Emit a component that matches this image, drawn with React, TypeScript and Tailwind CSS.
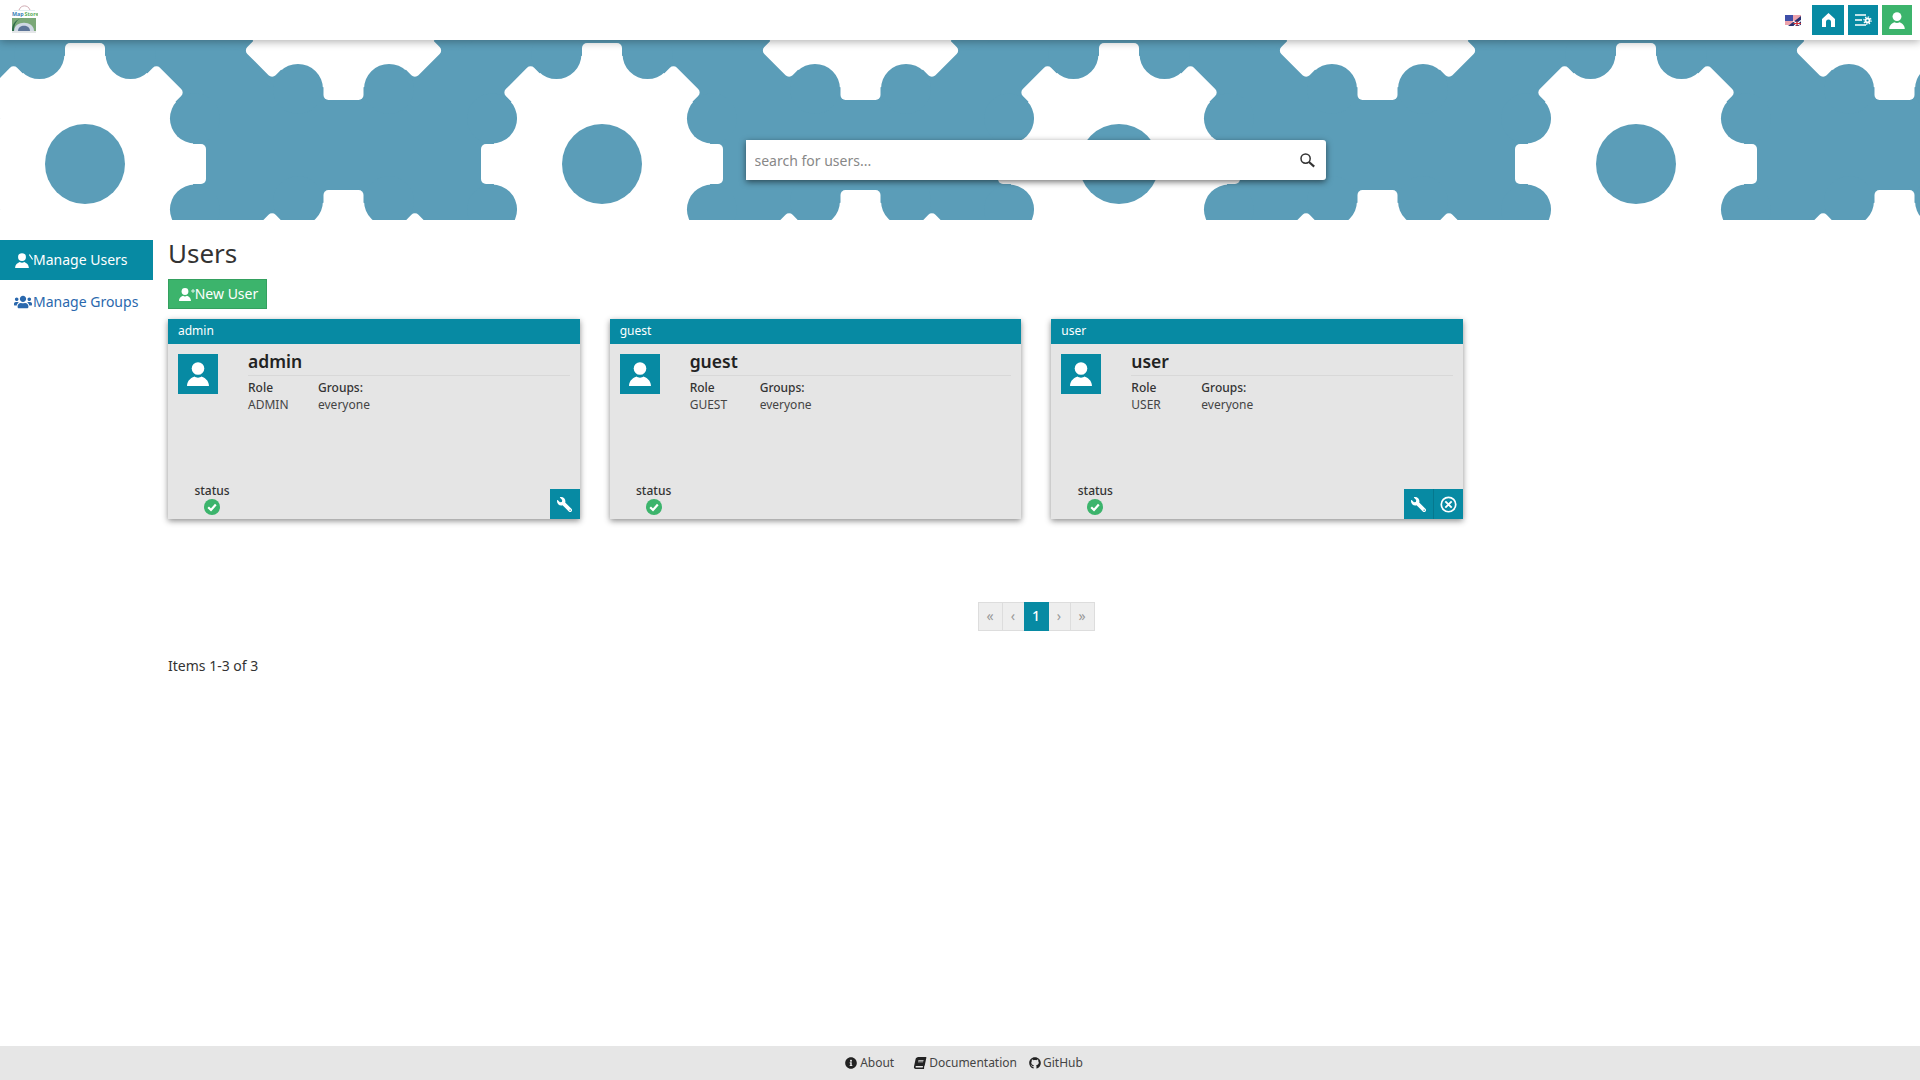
import { FaBook, FaGithub, FaInfoCircle, FaUsers, FaWrench } from "react-icons/fa";

const users = [
  { name: "admin", role: "ADMIN", canEdit: true, canDelete: false },
  { name: "guest", role: "GUEST", canEdit: false, canDelete: false },
  { name: "user", role: "USER", canEdit: true, canDelete: true },
];

const gearAngles = [0, 45, 90, 135, 180, 225, 270, 315];
const mainGears = [85, 602, 1119, 1636];
const offsetGears = [343.5, 860.5, 1377.5, 1894.5];

const PersonIcon = ({ className }: { className: string }) => (
  <svg viewBox="0 0 22 24" className={className} fill="currentColor">
    <circle cx="11" cy="6.5" r="6.3" />
    <path d="M0 24C0 18 5 15.5 7.5 14.5C9 16 13 16 14.5 14.5C17 15.5 22 18 22 24Z" />
  </svg>
);

const Gear = ({ x, y }: { x: number; y: number }) => (
  <g transform={`translate(${x} ${y})`}>
    <circle r="110" fill="#fff" />
    {gearAngles.map((a) => (
      <rect key={a} x="-20" y="-121" width="40" height="42" rx="5" fill="#fff" transform={`rotate(${a})`} />
    ))}
    {gearAngles.map((a) => (
      <circle key={a} cy="-119" r="25" fill="#5b9db8" transform={`rotate(${a + 22.5})`} />
    ))}
    <circle r="40" fill="#5b9db8" />
  </g>
);

const Logo = () => (
  <svg viewBox="0 0 28 30" className="w-7 h-[30px] ml-[10px] mt-[3px]">
    <path d="M9 7C11 1.5 18 1.5 20 7" fill="none" stroke="#c9a0a8" strokeWidth="0.9" />
    <path d="M4 7.5H25" stroke="#cfe0e6" strokeWidth="0.6" />
    <text x="2" y="12.5" fontSize="5.4" fontWeight="700" fontFamily="'Noto Sans', sans-serif">
      <tspan fill="#3b82b8">Map</tspan>
      <tspan fill="#5aae5c" dx="0.8">Store</tspan>
    </text>
    <rect x="2" y="15" width="24" height="13" fill="#7ba878" />
    <path d="M4 28C4 17 24 17 24 28Z" fill="#cfd8e4" />
    <path d="M8 28C8 21 20 21 20 28Z" fill="#5d7598" />
    <path d="M2 28C2 15 14 15 14 15C7 15 4 21 4 28Z" fill="#2f6e4a" />
    <rect x="2" y="28" width="24" height="2" fill="#e4e6e8" />
  </svg>
);

const Flag = () => (
  <svg viewBox="0 0 16 11" className="w-4 h-[11px] mr-[11px]">
    <rect width="16" height="11" fill="#fff" />
    <path d="M0 1H16M0 3H16M0 5H16M0 7H16M0 9H16" stroke="#d9475a" strokeWidth="1" />
    <rect width="8" height="6" fill="#3f4fa8" />
    <path d="M16 1L3 11H16Z" fill="#27306e" />
    <path d="M9 11L16 5.5M16 11L8 6" stroke="#fff" strokeWidth="1.2" />
    <path d="M12 6V11M8.5 8.5H16" stroke="#d33" strokeWidth="1" />
  </svg>
);

const StatusIcon = () => (
  <svg viewBox="0 0 16 16" className="w-4 h-4">
    <circle cx="8" cy="8" r="8" fill="#3cb46c" />
    <path d="M4.2 8.2L7 11L11.8 5.6" fill="none" stroke="#fff" strokeWidth="2.2" />
  </svg>
);

const UserCard = ({
  name,
  role,
  canEdit,
  canDelete,
}: {
  name: string;
  role: string;
  canEdit: boolean;
  canDelete: boolean;
}) => (
  <div className="h-[200px] flex flex-col bg-[#e5e5e5] shadow-[0_2px_6px_rgba(0,0,0,0.45)]">
    <div className="h-[25px] bg-[#078aa3] text-white text-[12px] leading-[23px] px-[10px]">{name}</div>
    <div className="flex-1 flex pl-[10px] pr-[10px] pt-[10px]">
      <div className="w-10 h-10 bg-[#078aa3] text-white flex items-center justify-center shrink-0">
        <PersonIcon className="w-[22px] h-6" />
      </div>
      <div className="flex-1 ml-[30px] text-[#333]">
        <div className="h-[21.5px] text-[17.5px] leading-[14px] font-semibold text-[#222] border-b border-[#d8d8d8]">{name}</div>
        <div className="flex text-[12px] leading-[17px] mt-[3.5px]">
          <div className="w-[70px]">
            <div className="font-medium">Role</div>
            <div className="text-[#444]">{role}</div>
          </div>
          <div>
            <div className="font-medium">Groups:</div>
            <div className="text-[#444]">everyone</div>
          </div>
        </div>
      </div>
    </div>
    <div className="flex items-end justify-between h-[30px]">
      <div className="w-[88px] flex flex-col items-center text-[12px] leading-[16px] font-medium text-[#333] pb-[4px]">
        <span>status</span>
        <StatusIcon />
      </div>
      <div className="flex">
        {canEdit && (
          <button className="w-[29.5px] h-[30px] bg-[#078aa3] text-white flex items-center justify-center">
            <FaWrench className="w-[15px] h-[15px] -scale-x-100" />
          </button>
        )}
        {canDelete && (
          <button className="w-[29.5px] h-[30px] bg-[#078aa3] text-white border-l border-[#06788e] flex items-center justify-center">
            <svg viewBox="0 0 16 16" className="w-[17px] h-[17px]" fill="none" stroke="currentColor">
              <circle cx="8" cy="8" r="6.8" strokeWidth="1.6" />
              <path d="M5 5L11 11M11 5L5 11" strokeWidth="1.8" />
            </svg>
          </button>
        )}
      </div>
    </div>
  </div>
);

const App = () => {
  return (
    <div className="h-screen flex flex-col bg-white font-['Noto_Sans',sans-serif] text-[14px] text-[#333]">
      <header className="relative z-10 h-10 bg-white shadow-[0_2px_8px_rgba(0,0,0,0.3)] flex items-start justify-between">
        <Logo />
        <div className="flex items-center h-10 pr-2">
          <Flag />
          <button className="w-8 h-[30px] bg-[#078aa3] text-white flex items-center justify-center">
            <svg viewBox="0 0 13 14" className="w-[13px] h-[14px]" fill="currentColor">
              <path d="M6.5 0L13 6V14H9V9A2.5 2.5 0 0 0 4 9V14H0V6Z" />
            </svg>
          </button>
          <button className="w-[30px] h-[30px] ml-1 bg-[#078aa3] text-white flex items-center justify-center">
            <svg viewBox="0 0 17 12" className="w-[17px] h-3" fill="none" stroke="currentColor">
              <path d="M0 1H11M0 6H7M0 11H11" strokeWidth="1.3" />
              <circle cx="12.5" cy="6.5" r="2" strokeWidth="1.8" />
              <circle cx="12.5" cy="6.5" r="3.6" strokeWidth="1.3" strokeDasharray="1.4 1.4" />
            </svg>
          </button>
          <button className="w-[30px] h-[30px] ml-1 bg-[#3cb46c] text-white flex items-center justify-center">
            <PersonIcon className="w-[16px] h-[17px]" />
          </button>
        </div>
      </header>

      <div className="relative h-[180px] bg-[#5b9db8] overflow-hidden pt-[100px] pl-[151px] flex justify-center items-start">
        <svg viewBox="0 40 1920 180" className="absolute left-0 top-0 w-[1920px] h-[180px]">
          {mainGears.map((x) => (
            <Gear key={x} x={x} y={164} />
          ))}
          {offsetGears.map((x) => (
            <Gear key={x} x={x} y={-21} />
          ))}
          {offsetGears.map((x) => (
            <Gear key={x} x={x} y={311} />
          ))}
        </svg>
        <div className="relative w-[580px] h-10 bg-white rounded-r-[3px] shadow-[0_2px_6px_rgba(0,0,0,0.55)] flex items-center pl-[9px] pr-[11px]">
          <input
            className="flex-1 text-[14px] outline-none placeholder:text-[#888]"
            placeholder="search for users..."
          />
          <svg viewBox="0 0 15 15" className="w-[15px] h-[15px]" fill="none" stroke="#333">
            <circle cx="5.6" cy="5.6" r="4.6" strokeWidth="1.5" />
            <path d="M9 9L14.2 13.6" strokeWidth="2.2" />
          </svg>
        </div>
      </div>

      <div className="flex-1 flex">
        <nav className="w-[153px] pt-5 shrink-0">
          <a className="h-10 bg-[#078aa3] text-white flex items-center pl-[15px] pb-[2px]">
            <PersonIcon className="w-[14px] h-[15px] mt-[2px]" />
            <svg viewBox="0 0 5 8" className="w-[4px] h-2 -mt-1" fill="none" stroke="currentColor">
              <path d="M0.5 1L4.5 7" strokeWidth="1.5" />
            </svg>
            <span>Manage Users</span>
          </a>
          <a className="h-10 mt-0.5 text-[#2a68ad] flex items-center pl-[14px] pb-[2px]">
            <FaUsers className="w-[18px] h-[16px] mr-px mt-[2px]" />
            <span>Manage Groups</span>
          </a>
        </nav>

        <main className="flex-1 pl-[15px] pr-[16px] pt-[18px]">
          <h1 className="text-[26px] leading-[30px] text-[#333]">Users</h1>
          <button className="mt-[11px] h-[30px] w-[99px] bg-[#3cb46c] border border-[#34a05f] text-white flex items-center justify-center pb-[2px] pl-[2px]">
            <PersonIcon className="w-[12px] h-[13px] mt-[2px]" />
            <svg viewBox="0 0 5 5" className="w-1 h-1 -mt-1" stroke="currentColor">
              <path d="M2.5 0V5M0 2.5H5" strokeWidth="1" />
            </svg>
            <span>New User</span>
          </button>
          <div className="mt-[10px] w-[1295px] grid grid-cols-3 gap-[30px]">
            {users.map((u) => (
              <UserCard key={u.name} {...u} />
            ))}
          </div>
          <div className="mt-[83px] flex justify-center">
            <div className="flex h-[29px] bg-[#eee] text-[#999] text-[14px] leading-[25px] text-center border border-[#ddd]">
              <span className="w-[24px] border-r border-[#ddd]">«</span>
              <span className="w-[21px]">‹</span>
              <span className="w-[25px] -my-px h-[29px] leading-[27px] bg-[#078aa3] text-white font-medium">1</span>
              <span className="w-[22px] border-r border-[#ddd]">›</span>
              <span className="w-[23px]">»</span>
            </div>
          </div>
          <div className="mt-[25px] leading-5">Items 1-3 of 3</div>
        </main>
      </div>

      <footer className="h-[34px] bg-[#e6e6e6] text-[#444] text-[12px] flex items-center justify-center pl-[8px]">
        <a className="flex items-center">
          <FaInfoCircle className="w-3 h-3 mr-[3px] text-[#222]" />
          About
        </a>
        <a className="flex items-center ml-5">
          <FaBook className="w-3 h-3 mr-[3px] -skew-x-12 text-[#222]" />
          Documentation
        </a>
        <a className="flex items-center ml-3">
          <FaGithub className="w-3 h-3 mr-[2px] text-[#222]" />
          GitHub
        </a>
      </footer>
    </div>
  );
};

export default App;
